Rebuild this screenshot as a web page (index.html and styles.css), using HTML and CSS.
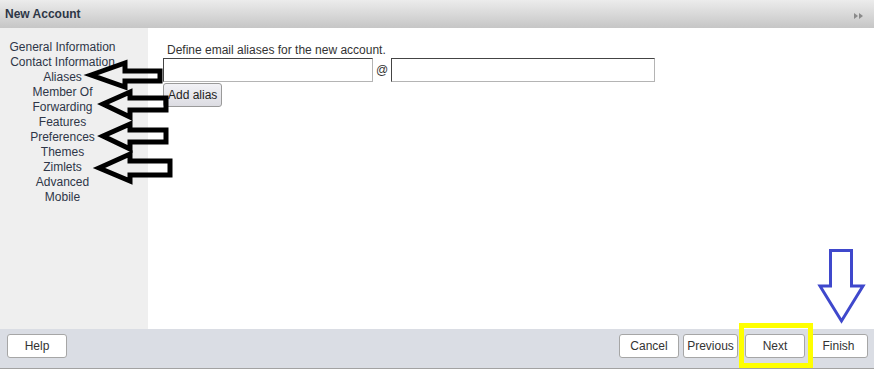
FILE: index.html
```html
<!DOCTYPE html>
<html lang="en">
<head>
  <meta charset="UTF-8">
  <title>New Account</title>
  <link rel="stylesheet" href="styles.css">
</head>
<body>

  <div class="dialog">
    <!-- Title bar -->
    <div class="titlebar">
      <span class="title">New Account</span>
      <svg class="title-icon" width="9" height="6" viewBox="0 0 9 6">
        <polygon points="0,0 4,3 0,6" fill="#8a8a8a"/>
        <polygon points="5,0 9,3 5,6" fill="#8a8a8a"/>
      </svg>
    </div>

    <div class="dialog-body">
      <!-- Wizard steps -->
      <div class="steps">
        <ul>
          <li>General Information</li>
          <li>Contact Information</li>
          <li>Aliases</li>
          <li>Member Of</li>
          <li>Forwarding</li>
          <li>Features</li>
          <li>Preferences</li>
          <li>Themes</li>
          <li>Zimlets</li>
          <li>Advanced</li>
          <li>Mobile</li>
        </ul>
      </div>

      <!-- Step content -->
      <div class="content">
        <p class="hint">Define email aliases for the new account.</p>
        <div class="alias-row">
          <input type="text" class="alias-name">
          <span class="at">@</span>
          <input type="text" class="alias-domain">
        </div>
        <button class="add-btn">Add alias</button>
      </div>
    </div>

    <!-- Footer buttons -->
    <div class="footer">
      <button class="btn help">Help</button>
      <div class="nav-buttons">
        <button class="btn">Cancel</button>
        <button class="btn prev">Previous</button>
        <button class="btn next">Next</button>
        <button class="btn finish">Finish</button>
      </div>
    </div>
  </div>

  <!-- Annotation arrows drawn over the screenshot -->
  <svg class="annotations" width="874" height="371" viewBox="0 0 874 371">
    <g fill="none" stroke="#000" stroke-width="5" stroke-linejoin="miter">
      <polygon points="91,75 125,63 125,71 160,71 160,81 125,81 125,87"/>
      <polygon points="103,104 130,92 130,98 166,98 166,110 130,110 130,117"/>
      <polygon points="103,136 130,124 130,130 166,130 166,142 130,142 130,149"/>
      <polygon points="99,168 130,154 130,161 170,161 170,175 130,175 130,181"/>
    </g>
    <polygon points="830.5,250.5 851.5,250.5 851.5,286 863,286 841.5,321 820,286 830.5,286"
             fill="none" stroke="#3f48cc" stroke-width="3"/>
    <rect x="741.5" y="325.5" width="69" height="40" fill="none" stroke="#ffff00" stroke-width="5"/>
  </svg>

</body>
</html>
```

FILE: styles.css
```css
:root {
  --text-color: #333333;
  --step-color: #2e3648;
  --steps-bg: #efefef;
  --footer-bg: #dadde4;
}

html, body {
  margin: 0;
  padding: 0;
  background: #ffffff;
  font-family: "Liberation Sans", Arial, sans-serif;
  font-size: 12px;
  color: var(--text-color);
}

body {
  position: relative;
  width: 874px;
  height: 371px;
  overflow: hidden;
}

.dialog {
  display: flex;
  flex-direction: column;
  width: 874px;
}

/* Title bar */
.titlebar {
  height: 28px;
  display: flex;
  align-items: center;
  justify-content: space-between;
  padding: 0 11px 0 5px;
  background: linear-gradient(#ececec, #c6c6c6);
}

.title {
  font-weight: bold;
  color: #2d3646;
}

.title-icon {
  margin-top: 3px;
}

/* Body */
.dialog-body {
  display: flex;
  height: 301px;
}

.steps {
  width: 148px;
  background: var(--steps-bg);
}

.steps ul {
  list-style: none;
  margin: 0;
  padding: 12px 0 0;
  width: 125px;
  text-align: center;
}

.steps li {
  line-height: 15px;
  color: var(--step-color);
  white-space: nowrap;
}

.content {
  flex: 1;
  padding: 15px 0 0 15px;
}

.hint {
  margin: 0 0 1px 4px;
  line-height: 14px;
}

.alias-row {
  display: flex;
  align-items: center;
}

input {
  height: 24px;
  box-sizing: border-box;
  border: 1px solid;
  border-color: #444 #b4b4b4 #b4b4b4 #444;
  padding: 2px;
  font: inherit;
  margin: 0;
}

.alias-name {
  width: 210px;
}

.alias-domain {
  width: 264px;
}

.at {
  width: 18px;
  text-align: center;
}

.add-btn {
  margin-top: 1px;
  height: 24px;
  padding: 0 4px;
  font: inherit;
  color: #222;
  white-space: nowrap;
  background: linear-gradient(#f2f2f6, #dcdce2);
  border: 1px solid #9a9a9a;
  border-radius: 3px;
}

/* Footer */
.footer {
  height: 40px;
  display: flex;
  justify-content: space-between;
  align-items: flex-start;
  padding: 5px 6px 0 7px;
  box-sizing: border-box;
  background: var(--footer-bg);
  border-bottom: 1px solid #a2a2a2;
}

.nav-buttons {
  display: flex;
  gap: 4px;
}

.btn {
  height: 24px;
  width: 60px;
  padding: 0;
  font: inherit;
  color: var(--text-color);
  background: #ffffff;
  border: 1px solid #a6a6a6;
  border-radius: 3px;
}

.btn.prev {
  width: 55px;
}

.btn.next {
  margin-left: 3px;
}

.btn.finish {
  width: 59px;
}

/* Annotations on top */
.annotations {
  position: absolute;
  top: 0;
  left: 0;
  pointer-events: none;
}
```
